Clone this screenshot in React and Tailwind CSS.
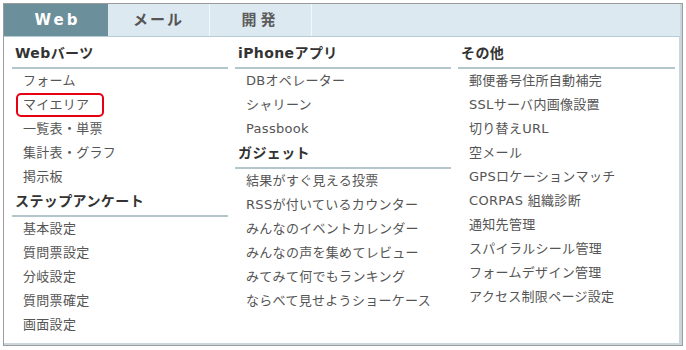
import React from "react";

const font = { fontFamily: '"DejaVu Sans", "Noto Sans CJK JP", sans-serif' };

function Heading({ children }) {
  return (
    <div className="pl-[3px] pt-[2px] pb-[4px] leading-[20px] text-[14px] font-bold tracking-[0.4px] text-[#333] border-b-2 border-[#b3c6ce]">
      {children}
    </div>
  );
}

function Item({ children, boxed }) {
  return (
    <div className="relative pl-[11px] h-[24px] leading-[24px] text-[13px] tracking-[0.3px] text-[#555] whitespace-nowrap">
      {boxed && (
        <span className="absolute left-[4px] top-[0px] w-[88px] h-[24px] border-2 border-[#e60012] rounded-[5px]" />
      )}
      {children}
    </div>
  );
}

export default function App() {
  return (
    <div className="w-[686px] h-[350px] bg-white" style={font}>
      <div className="ml-[3px] mt-[3px] w-[680px] h-[343px] border border-[#9c9c9c] flex flex-col shadow-[inset_-3px_-2px_0_#c9d6dc]">
        <div className="flex h-[33px] bg-[#dce9f1] border-b border-[#b7ccd6] mr-[2px]">
          <div className="w-[104px] flex items-center justify-center bg-[#6b8f9b] text-white font-bold text-[15px] tracking-[3px] pl-[3px]">
            Web
          </div>
          <div className="w-[102px] flex items-center justify-center text-[#555] font-bold text-[15px] tracking-[2px] border-r border-[#f2f7fa]">
            メール
          </div>
          <div className="w-[102px] flex items-center justify-center text-[#5c5c5c] font-bold text-[15px] tracking-[4px] border-r border-[#f2f7fa]">
            開発
          </div>
          <div className="flex-1" />
        </div>
        <div className="flex gap-[7px] pl-[8px] pt-[4px]">
          <div className="w-[216px]">
            <Heading>Webバーツ</Heading>
            <Item>フォーム</Item>
            <Item boxed>マイエリア</Item>
            <Item>一覧表・単票</Item>
            <Item>集計表・グラフ</Item>
            <Item>掲示板</Item>
            <Heading>ステップアンケート</Heading>
            <Item>基本設定</Item>
            <Item>質問票設定</Item>
            <Item>分岐設定</Item>
            <Item>質問票確定</Item>
            <Item>画面設定</Item>
          </div>
          <div className="w-[216px]">
            <Heading>iPhoneアプリ</Heading>
            <Item>DBオペレーター</Item>
            <Item>シャリーン</Item>
            <Item>Passbook</Item>
            <Heading>ガジェット</Heading>
            <Item>結果がすぐ見える投票</Item>
            <Item>RSSが付いているカウンター</Item>
            <Item>みんなのイベントカレンダー</Item>
            <Item>みんなの声を集めてレビュー</Item>
            <Item>みてみて何でもランキング</Item>
            <Item>ならべて見せようショーケース</Item>
          </div>
          <div className="w-[217px]">
            <Heading>その他</Heading>
            <Item>郵便番号住所自動補完</Item>
            <Item>SSLサーバ内画像設置</Item>
            <Item>切り替えURL</Item>
            <Item>空メール</Item>
            <Item>GPSロケーションマッチ</Item>
            <Item>CORPAS 組織診断</Item>
            <Item>通知先管理</Item>
            <Item>スパイラルシール管理</Item>
            <Item>フォームデザイン管理</Item>
            <Item>アクセス制限ページ設定</Item>
          </div>
        </div>
      </div>
    </div>
  );
}
